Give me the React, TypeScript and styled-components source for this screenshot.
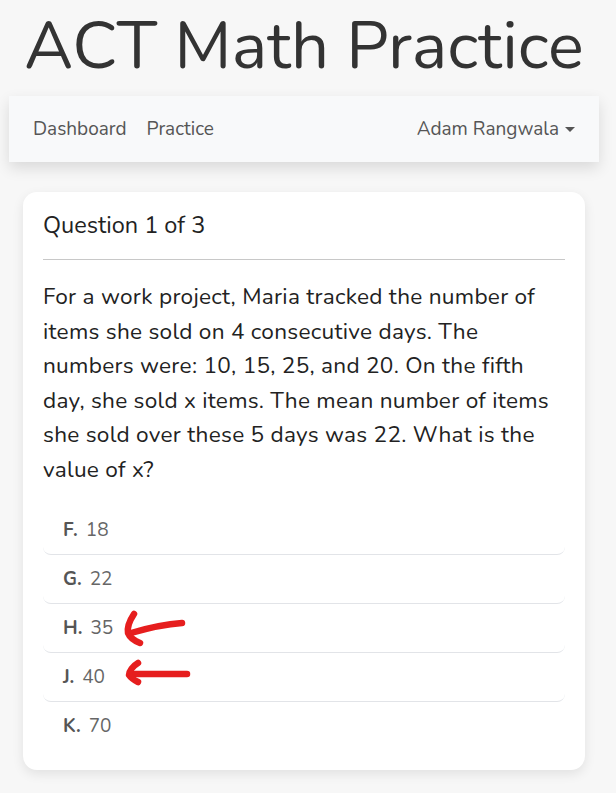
import React from "react";
import styled, { createGlobalStyle } from "styled-components";

const Global = createGlobalStyle`
  html, body { margin: 0; padding: 0; background: #f7f7f7; }
  body { font-family: "Nunito", "Lato", "Open Sans", sans-serif; color: #333; }
`;

const Page = styled.div`
  padding: 0 17px 24px 9px;
  display: flex;
  flex-direction: column;
`;

const Title = styled.h1`
  margin: 0;
  padding-top: 6px;
  height: 90px;
  text-align: center;
  font-size: 67px;
  font-weight: 400;
  line-height: 80px;
  color: #333;
`;

const NavBar = styled.nav`
  height: 66px;
  background: #f8f9fa;
  box-shadow: 0 6px 14px rgba(0, 0, 0, 0.12);
  display: flex;
  align-items: center;
  justify-content: space-between;
  padding: 0 24px;
`;

const NavGroup = styled.div`
  display: flex;
  align-items: center;
  gap: 20px;
`;

const NavLink = styled.a`
  font-size: 19px;
  color: #555;
  text-decoration: none;
  display: flex;
  align-items: center;
  gap: 6px;
`;

const Caret = styled.span`
  width: 0;
  height: 0;
  border-left: 5px solid transparent;
  border-right: 5px solid transparent;
  border-top: 5px solid #555;
  margin-top: 1px;
`;

const Card = styled.section`
  margin: 30px 14px 0 14px;
  background: #fff;
  border-radius: 14px;
  box-shadow: 0 4px 12px rgba(0, 0, 0, 0.09);
  padding: 20px 20px 19px 20px;
`;

const CardHeader = styled.h2`
  margin: 0;
  font-weight: 400;
  font-size: 23.5px;
  line-height: 26px;
  color: #222;
  padding-bottom: 21px;
  border-bottom: 1px solid #c8c8c8;
`;

const Question = styled.p`
  margin: 20px 0 18px 0;
  font-size: 22.6px;
  line-height: 34.6px;
  letter-spacing: 0.28px;
  color: #222;
`;

const Options = styled.ul`
  list-style: none;
  margin: 0;
  padding: 0;
`;

const Option = styled.li<{ $last?: boolean }>`
  position: relative;
  height: 49px;
  box-sizing: border-box;
  padding: 0 20px;
  display: flex;
  align-items: center;
  gap: 8px;
  font-size: 19px;
  color: #666;
  border-radius: 8px;
  border-bottom: ${(p) => (p.$last ? "none" : "1px solid #e2e4e8")};
`;

const Letter = styled.span`
  font-weight: 700;
  color: #555;
`;

const ArrowSvg = styled.svg`
  position: absolute;
  left: 80px;
  top: 4px;
  overflow: visible;
`;

const Arrow1 = () => (
  <ArrowSvg width="70" height="40" viewBox="0 0 70 40">
    <g fill="none" stroke="#e61e1e" strokeWidth="6.5" strokeLinecap="round" strokeLinejoin="round">
      <path d="M59 15 C 45 16, 25 20, 8 25" />
      <path d="M11 6 C 7 12, 4 19, 5 25 C 7 30, 12 33, 17 35" />
    </g>
  </ArrowSvg>
);

const Arrow2 = () => (
  <ArrowSvg width="70" height="40" viewBox="0 0 70 40">
    <g fill="none" stroke="#e61e1e" strokeWidth="6.5" strokeLinecap="round" strokeLinejoin="round">
      <path d="M64 17 L 10 17" />
      <path d="M15 6 C 10 9, 6 14, 6 18 C 8 21, 11 23, 15 25" />
    </g>
  </ArrowSvg>
);

const options = [
  { l: "F.", v: "18" },
  { l: "G.", v: "22" },
  { l: "H.", v: "35", a: 1 },
  { l: "J.", v: "40", a: 2 },
  { l: "K.", v: "70" },
];

export default function App() {
  return (
    <>
      <Global />
      <Page>
        <Title>ACT Math Practice</Title>
        <NavBar>
          <NavGroup>
            <NavLink href="#">Dashboard</NavLink>
            <NavLink href="#">Practice</NavLink>
          </NavGroup>
          <NavLink href="#">
            Adam Rangwala <Caret />
          </NavLink>
        </NavBar>
        <Card>
          <CardHeader>Question 1 of 3</CardHeader>
          <Question>
            For a work project, Maria tracked the number of items she sold on 4 consecutive days. The
            numbers were: 10, 15, 25, and 20. On the fifth day, she sold x items. The mean number of
            items she sold over these 5 days was 22. What is the value of x?
          </Question>
          <Options>
            {options.map((o, i) => (
              <Option key={o.l} $last={i === options.length - 1}>
                <Letter>{o.l}</Letter>
                <span>{o.v}</span>
                {o.a === 1 && <Arrow1 />}
                {o.a === 2 && <Arrow2 />}
              </Option>
            ))}
          </Options>
        </Card>
      </Page>
    </>
  );
}
